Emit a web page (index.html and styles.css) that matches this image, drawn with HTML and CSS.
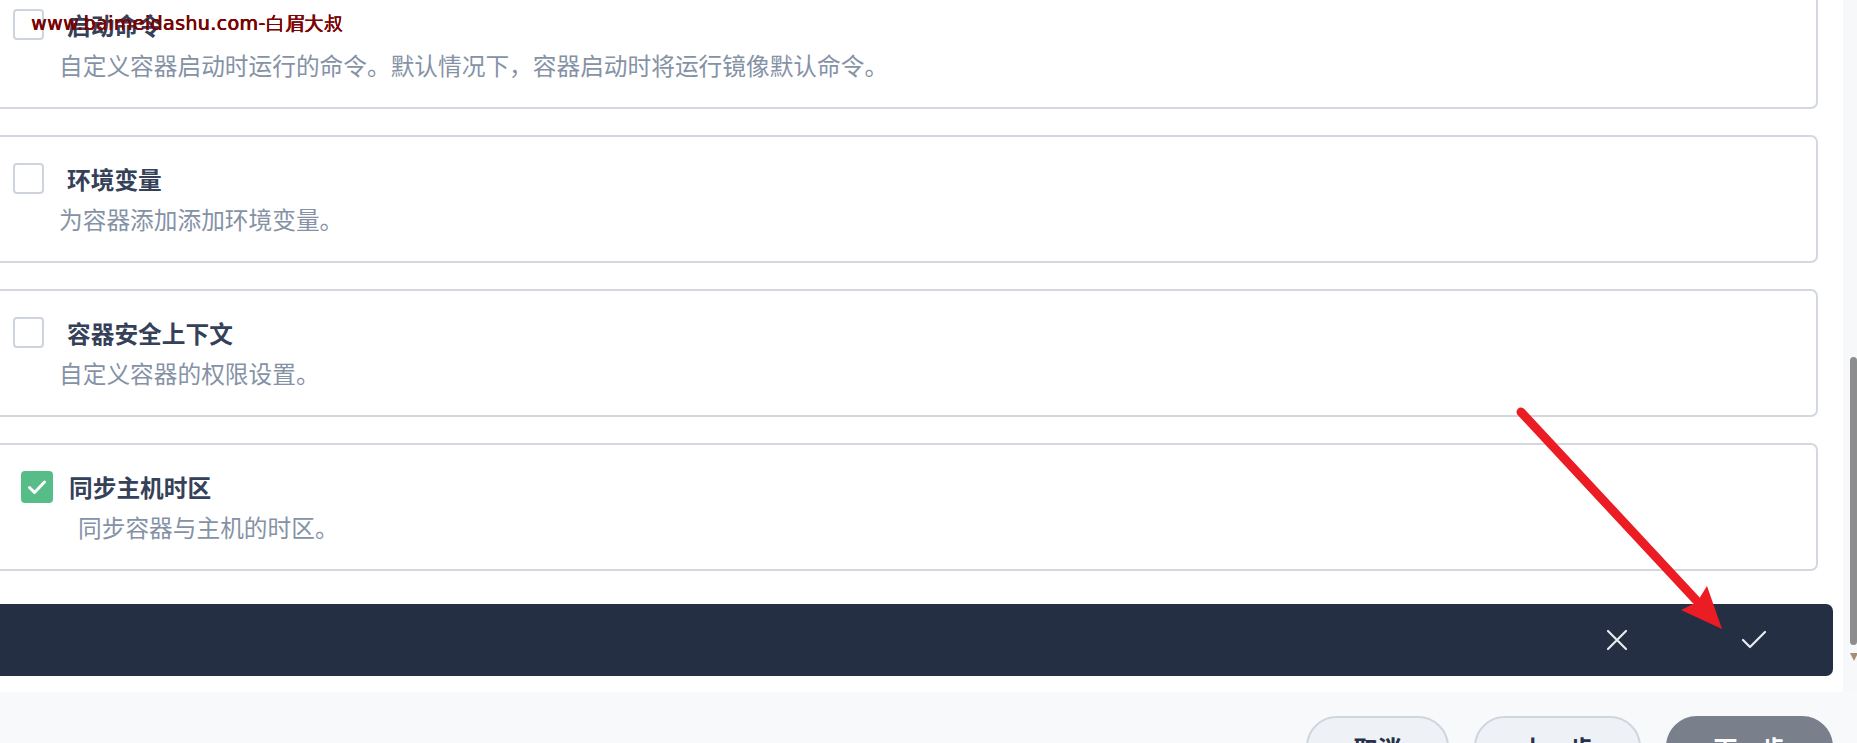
FILE: index.html
```html
<!DOCTYPE html>
<html>
<head>
  <meta charset="utf-8">
  <meta name="viewport" content="width=device-width">
  <link rel="stylesheet" href="styles.css">
  <title>容器设置</title>
</head>
<body>
  <div class="page">
    <div class="main">
      <div class="content">
        <div class="list">
          <div class="card">
            <span class="box"></span>
            <div class="txt">
              <div class="title">启动命令</div>
              <div class="desc">自定义容器启动时运行的命令。默认情况下，容器启动时将运行镜像默认命令。</div>
            </div>
          </div>
          <div class="card">
            <span class="box"></span>
            <div class="txt">
              <div class="title">环境变量</div>
              <div class="desc">为容器添加添加环境变量。</div>
            </div>
          </div>
          <div class="card">
            <span class="box"></span>
            <div class="txt">
              <div class="title">容器安全上下文</div>
              <div class="desc">自定义容器的权限设置。</div>
            </div>
          </div>
          <div class="card checked">
            <span class="box">
              <svg width="32" height="32" viewBox="0 0 32 32"><path d="M8.5 16.5 L13.5 21.5 L23.5 11" fill="none" stroke="#fff" stroke-width="3" stroke-linecap="round" stroke-linejoin="round"/></svg>
            </span>
            <div class="txt">
              <div class="title">同步主机时区</div>
              <div class="desc">同步容器与主机的时区。</div>
            </div>
          </div>
        </div>
        <div class="bar">
          <button class="icon-btn" type="button">
            <svg width="22" height="22" viewBox="0 0 22 22"><path d="M2 2 L20 20 M20 2 L2 20" stroke="#e9ebef" stroke-width="2.2" stroke-linecap="round"/></svg>
          </button>
          <button class="icon-btn" type="button">
            <svg width="26" height="20" viewBox="0 0 26 20"><path d="M2 10 L9 17 L24 2" fill="none" stroke="#e9ebef" stroke-width="2.2" stroke-linecap="round" stroke-linejoin="round"/></svg>
          </button>
        </div>
      </div>
      <div class="track">
        <div class="thumb"></div>
        <div class="down"></div>
      </div>
    </div>
    <div class="footer">
      <button class="btn" type="button">取消</button>
      <button class="btn wide" type="button">上一步</button>
      <button class="btn wide primary" type="button">下一步</button>
    </div>

    <div class="watermark">www.baimeidashu.com-白眉大叔</div>
    <svg class="mark" width="1857" height="743" viewBox="0 0 1857 743">
      <line x1="1521" y1="412" x2="1696" y2="600" stroke="#ec1c24" stroke-width="9" stroke-linecap="round"/>
      <polygon points="1722,629 1707,586 1697,602 1681,610" fill="#ec1c24"/>
    </svg>
  </div>
</body>
</html>
```

FILE: styles.css
```css
body {
  margin: 0;
  background: #ffffff;
  font-family: "Noto Sans CJK SC", "Noto Sans", sans-serif;
}
.page {
  position: relative;
  width: 1857px;
  height: 743px;
  overflow: hidden;
  display: flex;
  flex-direction: column;
}
.main {
  display: flex;
  height: 692px;
  flex-shrink: 0;
}
.content {
  flex: 1;
  background: #ffffff;
}
.list {
  display: flex;
  flex-direction: column;
  gap: 26px;
  margin: -19px 25px 0 -20px;
}
.card {
  box-sizing: border-box;
  height: 128px;
  border: 2px solid #d2d7e0;
  border-radius: 7px;
  display: flex;
  align-items: flex-start;
  padding: 26px 0 0 31px;
}
.box {
  box-sizing: border-box;
  width: 31px;
  height: 31px;
  border: 2px solid #ced4dd;
  border-radius: 4px;
  background: #fff;
  flex-shrink: 0;
}
.txt {
  margin-left: 15px;
}
.title {
  font-size: 23.7px;
  line-height: 32px;
  font-weight: 700;
  color: #354159;
  margin-left: 8px;
}
.desc {
  margin-top: 8px;
  font-size: 23.7px;
  line-height: 32px;
  color: #8592a6;
}
.card.checked {
  padding-left: 39px;
}
.card.checked .box {
  width: 32px;
  height: 32px;
  border: 0;
  background: #56bd89;
}
.card.checked .box svg {
  display: block;
}
.card.checked .txt {
  margin-left: 16px;
}
.card.checked .title {
  margin-left: 0;
}
.card.checked .desc {
  padding-left: 9px;
}
.bar {
  height: 72px;
  margin: 33px 10px 0 0;
  background: #252f44;
  border-radius: 0 7px 7px 0;
  display: flex;
  justify-content: flex-end;
  align-items: center;
  gap: 77px;
  padding-right: 49px;
}
.icon-btn {
  width: 60px;
  height: 60px;
  border: 0;
  padding: 0;
  background: none;
  display: flex;
  align-items: center;
  justify-content: center;
}
.track {
  width: 14px;
  background: #f7f8fa;
  padding-top: 357px;
}
.thumb {
  width: 7px;
  height: 288px;
  margin-left: 7px;
  background: #8d8d8d;
  border-radius: 4px;
}
.down {
  width: 0;
  height: 0;
  margin: 8px 0 0 7px;
  border-left: 4px solid transparent;
  border-right: 4px solid transparent;
  border-top: 8px solid #a38f72;
}
.footer {
  flex: 1;
  background: #f8f9fb;
  display: flex;
  justify-content: flex-end;
  align-items: flex-start;
  gap: 25px;
  padding: 24px 24px 0 0;
}
.btn {
  box-sizing: border-box;
  width: 143px;
  height: 62px;
  border: 2px solid #d0d6df;
  border-radius: 31px;
  background: #eef2f6;
  font-family: "Noto Sans CJK SC", "Noto Sans", sans-serif;
  font-size: 24px;
  font-weight: 700;
  color: #27324a;
  flex-shrink: 0;
}
.btn.wide {
  width: 167px;
}
.btn.primary {
  background: #7a7f8c;
  border-color: #7a7f8c;
  color: #ffffff;
}
.watermark {
  position: absolute;
  left: 31px;
  top: 10px;
  font-family: "DejaVu Sans", sans-serif;
  font-size: 19px;
  line-height: 26px;
  letter-spacing: 0.4px;
  color: #7a0303;
  text-shadow: 0.6px 0 0 #7a0303, 0 0.4px 0 #7a0303;
}
.mark {
  position: absolute;
  left: 0;
  top: 0;
  pointer-events: none;
}
```
